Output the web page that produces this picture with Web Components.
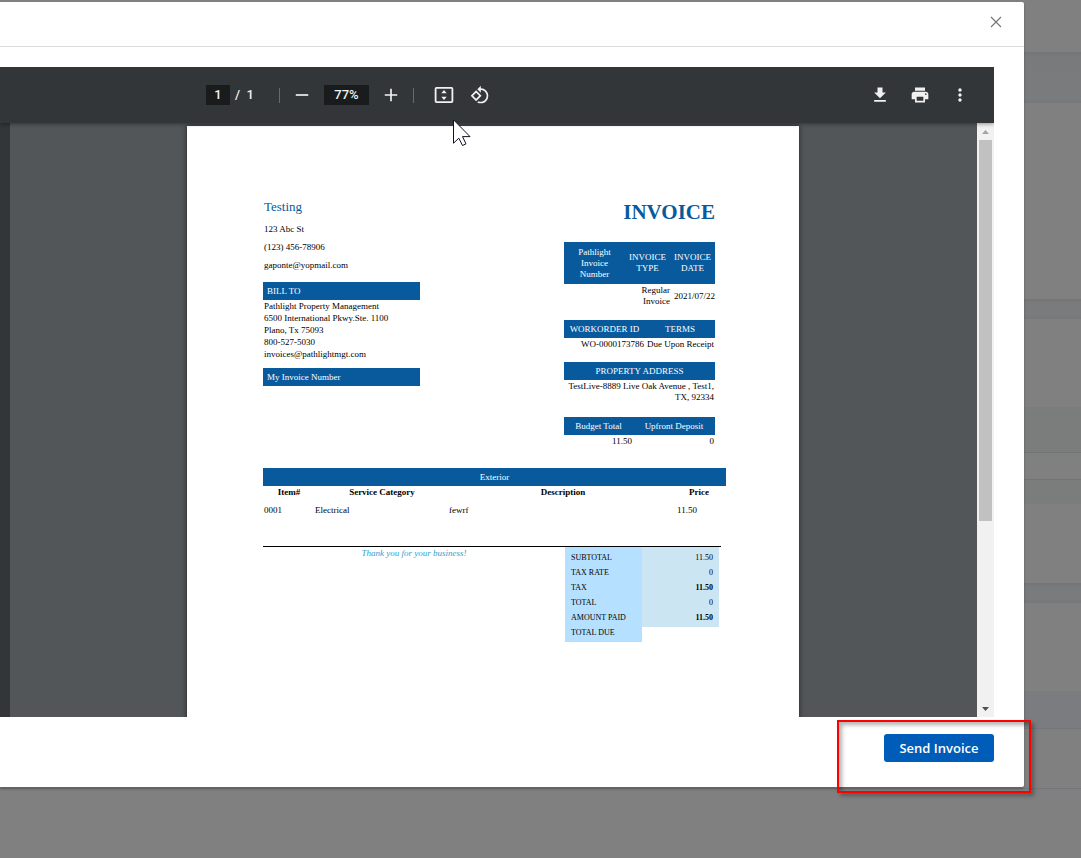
<!DOCTYPE html>
<html lang="en">
<head>
<meta charset="utf-8">
<title>Send Invoice</title>
<style>
  html, body { height: 100%; }
  body { margin: 0; overflow: hidden; background: #808080; font-family: Inter, "Open Sans", sans-serif; }
</style>
</head>
<body>
<invoice-screen></invoice-screen>
<script>
const define = (name, html) => {
  const template = document.createElement('template');
  template.innerHTML = html;
  customElements.define(name, class extends HTMLElement {
    constructor() {
      super();
      this.attachShadow({ mode: 'open' }).append(template.content.cloneNode(true));
    }
  });
};

/* Dimmed page that lies behind the dialog */
define('dimmed-page', `
<style>
  :host { display: block; height: 100%; background: #808080; }
  div { box-sizing: border-box; }
  .gap { background: linear-gradient(#737476, #797a7c 4px, #7a7b7d calc(100% - 4px), #767779); }
  .green { background: #7a7d7b; }
  .cool { background: #7b7c7f; }
  .line { border-bottom: 1px solid #727375; }
  .soft { border-bottom: 1px solid #75767b; }
</style>
<div style="height:52px"></div>
<div class="gap" style="height:51px"></div>
<div style="height:196px"></div>
<div class="gap" style="height:20px"></div>
<div style="height:88px"></div>
<div class="green line" style="height:46px"></div>
<div class="line" style="height:27px"></div>
<div class="green" style="height:24px"></div>
<div style="height:79px"></div>
<div class="gap" style="height:20px"></div>
<div style="height:88px"></div>
<div class="cool soft" style="height:38px"></div>
<div class="soft" style="height:60px"></div>`);

define('modal-dialog', `
<style>
  :host { display: flex; flex-direction: column; background: #fff; border-radius: 0 2px 2px 0;
          box-shadow: 0 2px 3px rgba(0,0,0,.25); }
  header { box-sizing: border-box; height: 45px; flex: none; display: flex; align-items: center; justify-content: flex-end;
           padding: 0 20px 4px 0; border-bottom: 1px solid #dddbda; }
  button { border: 0; background: none; padding: 0; width: 16px; height: 16px; display: block; }
  svg { display: block; }
  main { flex: 1; min-height: 0; display: flex; padding: 20px 30px 0 0; }
  ::slotted([slot=body]) { flex: 1; min-width: 0; }
  footer { flex: none; display: flex; justify-content: flex-end; padding: 17px 30px 25px 0; position: relative; }
</style>
<header><button aria-label="Close"><svg width="16" height="16" viewBox="0 0 16 16"><path d="M3 3l10 10M13 3L3 13" stroke="#777" stroke-width="1.2" fill="none"/></svg></button></header>
<main><slot name="body"></slot></main>
<footer><slot name="footer"></slot></footer>`);

define('send-button', `
<style>
  :host { display: block; }
  button { display: block; height: 28px; width: 110px; padding: 0; border: 0; border-radius: 3px; background: #005cb9; color: #fff;
           font: 600 13px/26px "Open Sans", sans-serif; }
</style>
<button><slot></slot></button>`);

/* Red annotation frame round the footer button */
define('highlight-frame', `
<style>
  :host { position: absolute; right: -7px; bottom: -6px; width: 194px; height: 73px; box-sizing: border-box; pointer-events: none;
          border: 2px solid #f00; box-shadow: 3px 3px 4px rgba(0,0,0,.3), inset 3px 3px 4px rgba(0,0,0,.3); }
</style>`);

define('pdf-toolbar', `
<style>
  :host { display: flex; align-items: center; height: 56px; flex: none; background: #323639; color: #f1f1f1; padding: 0 22px 0 206px;
          font: 500 13px/20px Roboto, sans-serif; position: relative; z-index: 1; box-shadow: 0 1px 4px rgba(0,0,0,.4); box-sizing: border-box; }
  input { box-sizing: border-box; height: 20px; border: 0; padding: 0; background: #191b1c; color: #f1f1f1; font: inherit; text-align: center; }
  .page { width: 24px; } .zoom { width: 45px; margin: 0 10px; }
  .total { margin-left: 5px; width: 44px; white-space: pre; }
  .bar { width: 1px; height: 15px; background: #67696b; }
  button { border: 0; background: none; padding: 0; width: 24px; height: 24px; display: grid; place-items: center; color: inherit; }
  svg { display: block; fill: #f1f1f1; }
  .minus { margin-left: 10px; } .fit { margin-left: 18px; } .turn { margin-left: 12px; }
  .plus { margin-right: 10px; }
  .right { margin-left: auto; display: flex; gap: 16px; }
</style>
<input class="page" aria-label="Page number" value="1"><span class="total">/  1</span>
<span class="bar"></span>
<button class="minus" aria-label="Zoom out"><svg width="20" height="20" viewBox="0 0 24 24"><path d="M4.500 11h15v2h-15z"/></svg></button>
<input class="zoom" aria-label="Zoom level" value="77%">
<button class="plus" aria-label="Zoom in"><svg width="20" height="20" viewBox="0 0 24 24"><path d="M19.500 13H13v6.500h-2V13H4.500v-2H11V4.500h2V11h6.500z"/></svg></button>
<span class="bar"></span>
<button class="fit" aria-label="Fit to page"><svg width="20" height="20" viewBox="0 0 20 20"><path fill-rule="evenodd" d="M2.500 2h15A1.800 1.800 0 0 1 19.300 3.800v12.400a1.800 1.800 0 0 1-1.800 1.800h-15A1.800 1.800 0 0 1 .7 16.200V3.800A1.800 1.800 0 0 1 2.500 2zm0 1.700v12.600h15V3.700zM10 5l2.700 3.300H7.300zM10 15l2.700-3.300H7.300z"/></svg></button>
<button class="turn" aria-label="Rotate counterclockwise"><svg width="20" height="20" viewBox="0 0 24 24"><path d="M7.340 6.410L.86 12.900l6.490 6.480 6.490-6.480-6.500-6.490zM3.690 12.900l3.660-3.660L11 12.900l-3.660 3.660-3.650-3.660zm15.670-6.260A8.950 8.950 0 0 0 13 4V.76L8.760 5 13 9.240V6c1.790 0 3.580.68 4.950 2.050a7.007 7.007 0 0 1 0 9.900 6.973 6.973 0 0 1-7.790 1.440l-1.490 1.490C10.020 21.620 11.510 22 13 22c2.300 0 4.610-.88 6.360-2.640a8.980 8.980 0 0 0 0-12.720z"/></svg></button>
<div class="right">
<button aria-label="Download"><svg width="20" height="20" viewBox="0 0 24 24"><path d="M19 9h-4V3H9v6H5l7 7 7-7zM5 18v2h14v-2H5z"/></svg></button>
<button aria-label="Print"><svg width="20" height="20" viewBox="0 0 24 24"><path d="M19 8H5c-1.660 0-3 1.340-3 3v6h4v4h12v-4h4v-6c0-1.660-1.340-3-3-3zm-3 11H8v-5h8v5zm3-7c-.55 0-1-.45-1-1s.45-1 1-1 1 .45 1 1-.45 1-1 1zm-1-9H6v4h12V3z"/></svg></button>
<button aria-label="More actions"><svg width="20" height="20" viewBox="0 0 24 24"><path d="M12 8c1.100 0 2-.9 2-2s-.9-2-2-2-2 .9-2 2 .9 2 2 2zm0 2c-1.100 0-2 .9-2 2s.9 2 2 2 2-.9 2-2-.9-2-2-2zm0 6c-1.100 0-2 .9-2 2s.9 2 2 2 2-.9 2-2-.9-2-2-2z"/></svg></button>
</div>`);

define('scroll-track', `
<style>
  :host { display: flex; flex-direction: column; width: 17px; flex: none; background: #f1f1f1; }
  .arrow { height: 17px; flex: none; display: grid; place-items: center; }
  .rail { flex: 1; padding: 0 2px; }
  .thumb { height: 68%; background: #c1c1c1; }
  svg { display: block; }
</style>
<div class="arrow"><svg width="7" height="4" viewBox="0 0 7 4" fill="#a3a3a3"><path d="M0 4L3.500 0 7 4z"/></svg></div>
<div class="rail"><div class="thumb"></div></div>
<div class="arrow"><svg width="7" height="4" viewBox="0 0 7 4" fill="#505050"><path d="M0 0h7L3.500 4z"/></svg></div>`);

define('pdf-viewer', `
<style>
  :host { display: flex; flex-direction: column; position: relative; overflow: hidden; background: #525659; }
  .view { flex: 1; min-height: 0; display: flex; }
  .side { width: 10px; flex: none; background: #323639; }
  .canvas { flex: 1; min-width: 0; overflow: hidden; display: flex; justify-content: center; padding: 3px 1px 0 0; }
  .sheet { width: 612px; height: 792px; flex: none; background: #fff; box-shadow: 0 0 5px rgba(0,0,0,.6); }
  .cursor { position: absolute; left: 453px; top: 52px; z-index: 2; }
</style>
<pdf-toolbar></pdf-toolbar>
<div class="view"><div class="side"></div><div class="canvas"><div class="sheet"><slot></slot></div></div><scroll-track></scroll-track></div>
<svg class="cursor" width="20" height="28" viewBox="0 0 20 28"><path d="M.5.8v23.400l5.300-5 3.700 7.300 3.500-1.600-3.500-7.300h7.500z" fill="#fff" stroke="#111122" stroke-width="1"/></svg>`);

define('invoice-sheet', `
<style>
  :host { display: block; padding: 70px 73px 0 76px; font: 9px/12px "Liberation Serif", serif; color: #000; }
  .top { display: flex; justify-content: space-between; padding-right: 11px; height: 272px; }
  .from { width: 157px; } .meta { width: 151px; }
  h2 { margin: 0 0 2px; padding-left: 1px; font-weight: 400; font-size: 13px; line-height: 22px; color: #085a9d; }
  h1 { margin: 0 0 14px; font-size: 21px; line-height: 32px; color: #085a9d; text-align: right; }
  h3 { margin: 0; font-size: 9px; font-weight: 400; line-height: 18px; background: #085a9d; color: #fff; padding-left: 4px; }
  p { margin: 0; padding-left: 1px; white-space: nowrap; }
  .contact { line-height: 18px; margin-bottom: 8px; }
  .bill { margin-bottom: 8px; }
  table { border-collapse: collapse; table-layout: fixed; width: 100%; }
  th, td { padding: 0; }
  .meta th { background: #085a9d; color: #fff; font-weight: 400; height: 18px; }
  .meta td { text-align: right; padding-right: 1px; white-space: nowrap; height: 12px; }
  .a { line-height: 11px; margin-bottom: 12px; }
  .meta .a th { height: 42px; } .meta .a td { height: 24px; padding-right: 0; }
  .b { margin-bottom: 12px; } .c { line-height: 11px; margin-bottom: 13px; } .meta .c td { height: 24px; }
  .items .cap { background: #085a9d; color: #fff; font-weight: 400; height: 18px; }
  .items th { height: 12px; font-weight: 700; } .items td { height: 24px; }
  .items td:first-child { padding-left: 1px; }
  .items th:last-child { padding-right: 5px; }
  .items .cap:last-child { padding: 0; }
  .bottom { display: flex; margin: 24px 5px 0 0; border-top: 1px solid #000; }
  .thanks { width: 302px; text-align: center; font-style: italic; color: #2d9fd0; }
  .sum { width: 154px; font-size: 8px; line-height: 15px; }
  .sum th { font-weight: 400; text-align: left; padding-left: 6px; background: #b6e0ff; }
  .sum td { text-align: right; padding-right: 6px; background: #cce5f3; }
  .sum .first > * { padding-top: 3px; } .sum .fifth > * { padding-bottom: 2px; }
  .sum .last th { line-height: 11px; padding-bottom: 4px; } .sum .last td { background: none; }
</style>
<div class="top">
  <section class="from">
    <h2>Testing</h2>
    <div class="contact"><p>123 Abc St</p><p>(123) 456-78906</p><p>gaponte@yopmail.com</p></div>
    <h3>BILL TO</h3>
    <div class="bill"><p>Pathlight Property Management</p><p>6500 International Pkwy.Ste. 1100</p><p>Plano, Tx 75093</p><p>800-527-5030</p><p>invoices@pathlightmgt.com</p></div>
    <h3>My Invoice Number</h3>
  </section>
  <section class="meta">
    <h1>INVOICE</h1>
    <table class="a"><colgroup><col style="width:61px"><col style="width:45px"><col style="width:45px"></colgroup>
      <tr><th>Pathlight<br>Invoice<br>Number</th><th>INVOICE<br>TYPE</th><th>INVOICE<br>DATE</th></tr>
      <tr><td></td><td>Regular<br>Invoice</td><td>2021/07/22</td></tr></table>
    <table class="b"><colgroup><col style="width:81px"><col style="width:70px"></colgroup>
      <tr><th>WORKORDER ID</th><th>TERMS</th></tr>
      <tr><td>WO-0000173786</td><td>Due Upon Receipt</td></tr></table>
    <table class="c"><tr><th>PROPERTY ADDRESS</th></tr>
      <tr><td>TestLive-8889 Live Oak Avenue , Test1,<br>TX, 92334</td></tr></table>
    <table class="d"><colgroup><col style="width:69px"><col style="width:82px"></colgroup>
      <tr><th>Budget Total</th><th>Upfront Deposit</th></tr>
      <tr><td>11.50</td><td>0</td></tr></table>
  </section>
</div>
<table class="items"><colgroup><col style="width:52px"><col style="width:134px"><col style="width:228px"><col style="width:49px"></colgroup>
  <tr><th class="cap" colspan="4">Exterior</th></tr>
  <tr><th>Item#</th><th>Service Category</th><th>Description</th><th>Price</th></tr>
  <tr><td>0001</td><td>Electrical</td><td>fewrf</td><td>11.50</td></tr></table>
<div class="bottom">
  <div class="thanks">Thank you for your business!</div>
  <table class="sum">
    <tr class="first"><th>SUBTOTAL</th><td>11.50</td></tr>
    <tr><th>TAX RATE</th><td>0</td></tr>
    <tr><th>TAX</th><td><b>11.50</b></td></tr>
    <tr><th>TOTAL</th><td>0</td></tr>
    <tr class="fifth"><th>AMOUNT PAID</th><td><b>11.50</b></td></tr>
    <tr class="last"><th>TOTAL DUE</th><td></td></tr>
  </table>
</div>`);

define('invoice-screen', `
<style>
  :host { display: block; height: 100vh; position: relative; }
  modal-dialog { position: absolute; inset: 2px 57px 71px 0; }
</style>
<dimmed-page></dimmed-page>
<modal-dialog>
  <pdf-viewer slot="body"><invoice-sheet></invoice-sheet></pdf-viewer>
  <send-button slot="footer">Send Invoice</send-button>
  <highlight-frame slot="footer"></highlight-frame>
</modal-dialog>`);
</script>
</body>
</html>
